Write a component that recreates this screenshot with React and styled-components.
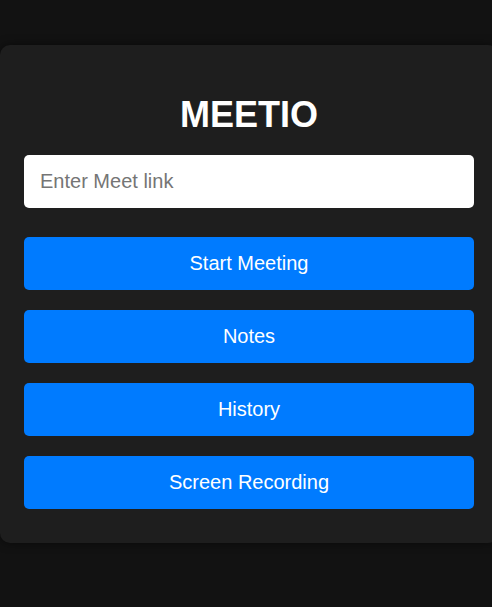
import React, { useState } from 'react';
import styled, { createGlobalStyle } from 'styled-components';

const GlobalStyle = createGlobalStyle`
  html, body {
    margin: 0;
    padding: 0;
    background-color: #121212;
    font-family: 'Liberation Sans', Arial, sans-serif;
    overflow: hidden;
  }
`;

const Page = styled.div`
  min-height: 607px;
  padding-top: 45px;
  box-sizing: border-box;
`;

const Card = styled.div`
  width: 498px;
  box-sizing: border-box;
  padding: 50px 24px 34px;
  background-color: #1e1e1e;
  border-radius: 10px;
  box-shadow: 0 0 10px rgba(0, 0, 0, 0.5);
  display: flex;
  flex-direction: column;
`;

const Title = styled.h1`
  margin: 0 0 20px;
  text-align: center;
  color: #ffffff;
  font-size: 36px;
  font-weight: bold;
  line-height: 40px;
`;

const LinkInput = styled.input`
  height: 53px;
  box-sizing: border-box;
  padding: 0 16px;
  margin-bottom: 29px;
  border: none;
  border-radius: 5px;
  background-color: #ffffff;
  font-family: inherit;
  font-size: 20px;
  color: #222;
  outline: none;

  &::placeholder {
    color: #757575;
  }
`;

const Actions = styled.div`
  display: flex;
  flex-direction: column;
  gap: 20px;
`;

const ActionButton = styled.button`
  height: 53px;
  border: none;
  border-radius: 5px;
  background-color: #007bff;
  color: #ffffff;
  font-family: inherit;
  font-size: 20px;
  cursor: pointer;
`;

const actions = ['Start Meeting', 'Notes', 'History', 'Screen Recording'];

export default function App() {
  const [link, setLink] = useState('');

  return (
    <Page>
      <GlobalStyle />
      <Card>
        <Title>MEETIO</Title>
        <LinkInput
          placeholder="Enter Meet link"
          value={link}
          onChange={(e) => setLink(e.target.value)}
        />
        <Actions>
          {actions.map((label) => (
            <ActionButton key={label}>{label}</ActionButton>
          ))}
        </Actions>
      </Card>
    </Page>
  );
}
